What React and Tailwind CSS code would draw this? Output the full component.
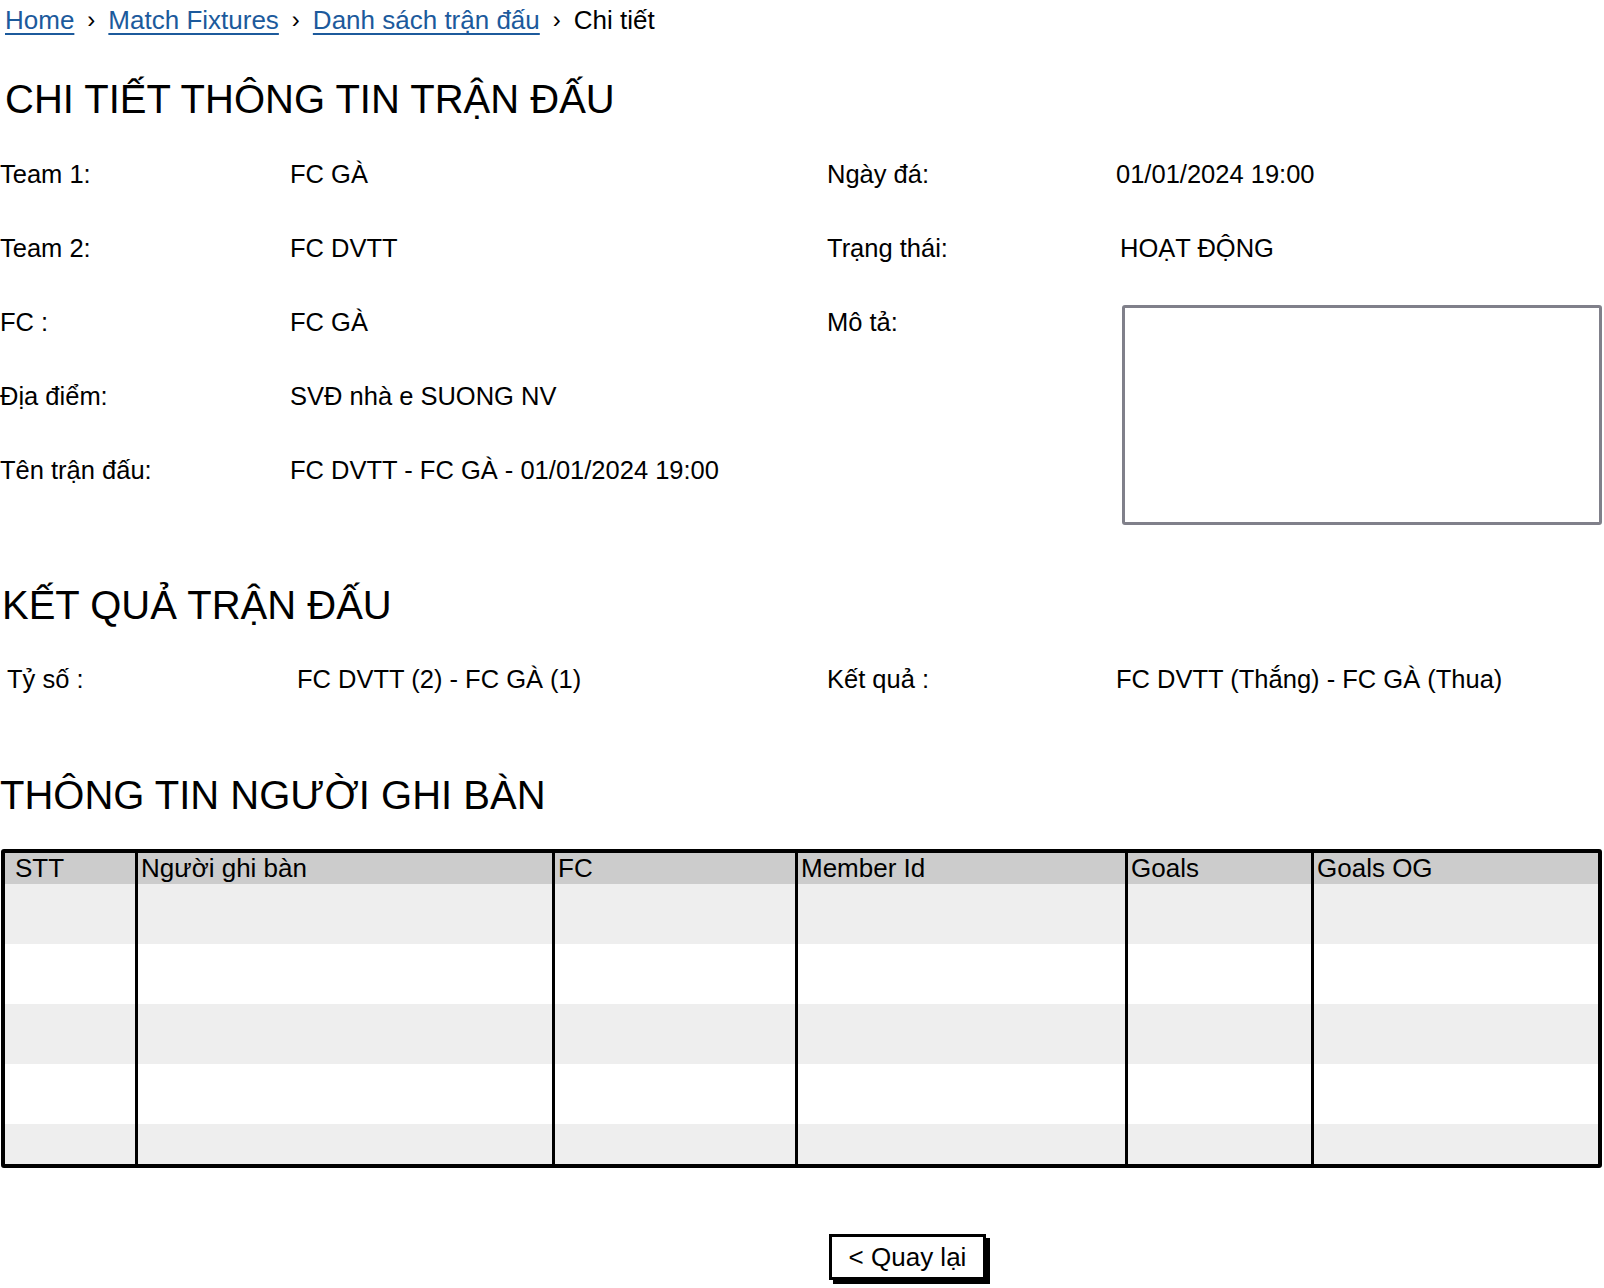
import React from "react";

const font = { fontFamily: '"Liberation Sans", Arial, sans-serif' };

const InfoRow = ({ label, value }) => (
  <div className="flex items-center h-[74px]">
    <div className="w-[290px] shrink-0">{label}</div>
    <div>{value}</div>
  </div>
);

const columns = [
  { title: "STT", w: "w-[130px]", pl: "pl-[10px]" },
  { title: "Người ghi bàn", w: "w-[417px]", pl: "pl-[3px]" },
  { title: "FC", w: "w-[243px]", pl: "pl-[3px]" },
  { title: "Member Id", w: "w-[330px]", pl: "pl-[3px]" },
  { title: "Goals", w: "w-[186px]", pl: "pl-[3px]" },
  { title: "Goals OG", w: "flex-1", pl: "pl-[3px]" },
];

const rows = ["bg-[#eeeeee]", "bg-white", "bg-[#eeeeee]", "bg-white", "bg-[#eeeeee]"];

export default function App() {
  return (
    <div className="w-[1604px] h-[1288px] bg-white text-black overflow-hidden text-[25.5px]" style={font}>
      {/* Breadcrumb */}
      <div className="flex items-center h-[40px] pl-[5px] text-[26px]">
        <a className="text-[#1c5a9c] underline decoration-2 underline-offset-4">Home</a>
        <span className="mx-[13px] text-[24px]">›</span>
        <a className="text-[#1c5a9c] underline decoration-2 underline-offset-4">Match Fixtures</a>
        <span className="mx-[13px] text-[24px]">›</span>
        <a className="text-[#1c5a9c] underline decoration-2 underline-offset-4">Danh sách trận đấu</a>
        <span className="mx-[13px] text-[24px]">›</span>
        <span>Chi tiết</span>
      </div>

      <h1 className="mt-[34px] pl-[5px] text-[40px] leading-[50px]">CHI TIẾT THÔNG TIN TRẬN ĐẤU</h1>

      {/* Match info */}
      <div className="flex mt-[13px]">
        <div className="w-[827px] shrink-0">
          <InfoRow label="Team 1:" value="FC GÀ" />
          <InfoRow label="Team 2:" value="FC DVTT" />
          <InfoRow label="FC :" value="FC GÀ" />
          <InfoRow label="Địa điểm:" value="SVĐ nhà e SUONG NV" />
          <InfoRow label="Tên trận đấu:" value="FC DVTT - FC GÀ - 01/01/2024 19:00" />
        </div>
        <div className="flex-1">
          <div className="flex items-center h-[74px]">
            <div className="w-[289px] shrink-0">Ngày đá:</div>
            <div>01/01/2024 19:00</div>
          </div>
          <div className="flex items-center h-[74px]">
            <div className="w-[289px] shrink-0">Trạng thái:</div>
            <div className="pl-[4px]">HOẠT ĐỘNG</div>
          </div>
          <div className="flex">
            <div className="w-[295px] shrink-0 h-[74px] flex items-center">Mô tả:</div>
            <div className="mt-[20px] w-[480px] h-[220px] border-[3px] border-[#80808a] rounded-[3px]" />
          </div>
        </div>
      </div>

      <h2 className="mt-[55px] pl-[2px] text-[40px] leading-[50px]">KẾT QUẢ TRẬN ĐẤU</h2>

      <div className="flex items-center h-[74px] mt-[12px]">
        <div className="w-[297px] shrink-0 pl-[7px]">Tỷ số :</div>
        <div className="w-[530px] shrink-0">FC DVTT (2) - FC GÀ (1)</div>
        <div className="w-[289px] shrink-0">Kết quả :</div>
        <div>FC DVTT (Thắng) - FC GÀ (Thua)</div>
      </div>

      <h2 className="mt-[54px] text-[40px] leading-[50px]">THÔNG TIN NGƯỜI GHI BÀN</h2>

      {/* Scorers table */}
      <div className="mt-[29px] ml-[1px] w-[1601px] border-[4px] border-black rounded-[3px] flex overflow-hidden">
        {columns.map((c, i) => (
          <div
            key={c.title}
            className={`${c.w} shrink-0 flex flex-col ${i > 0 ? "border-l-[3px] border-black" : ""}`}
          >
            <div className={`h-[31px] bg-[#cccccc] ${c.pl} leading-[31px] text-[26px]`}>{c.title}</div>
            {rows.map((bg, j) => (
              <div key={j} className={`${bg} ${j === 4 ? "h-[40px]" : "h-[60px]"}`} />
            ))}
          </div>
        ))}
      </div>

      {/* Back button */}
      <div className="mt-[66px] ml-[829px]">
        <button className="w-[157px] h-[46px] border-[3px] border-black bg-white shadow-[4px_4px_0_0_#000] text-[26px] flex items-center justify-center">
          &lt; Quay lại
        </button>
      </div>
    </div>
  );
}
